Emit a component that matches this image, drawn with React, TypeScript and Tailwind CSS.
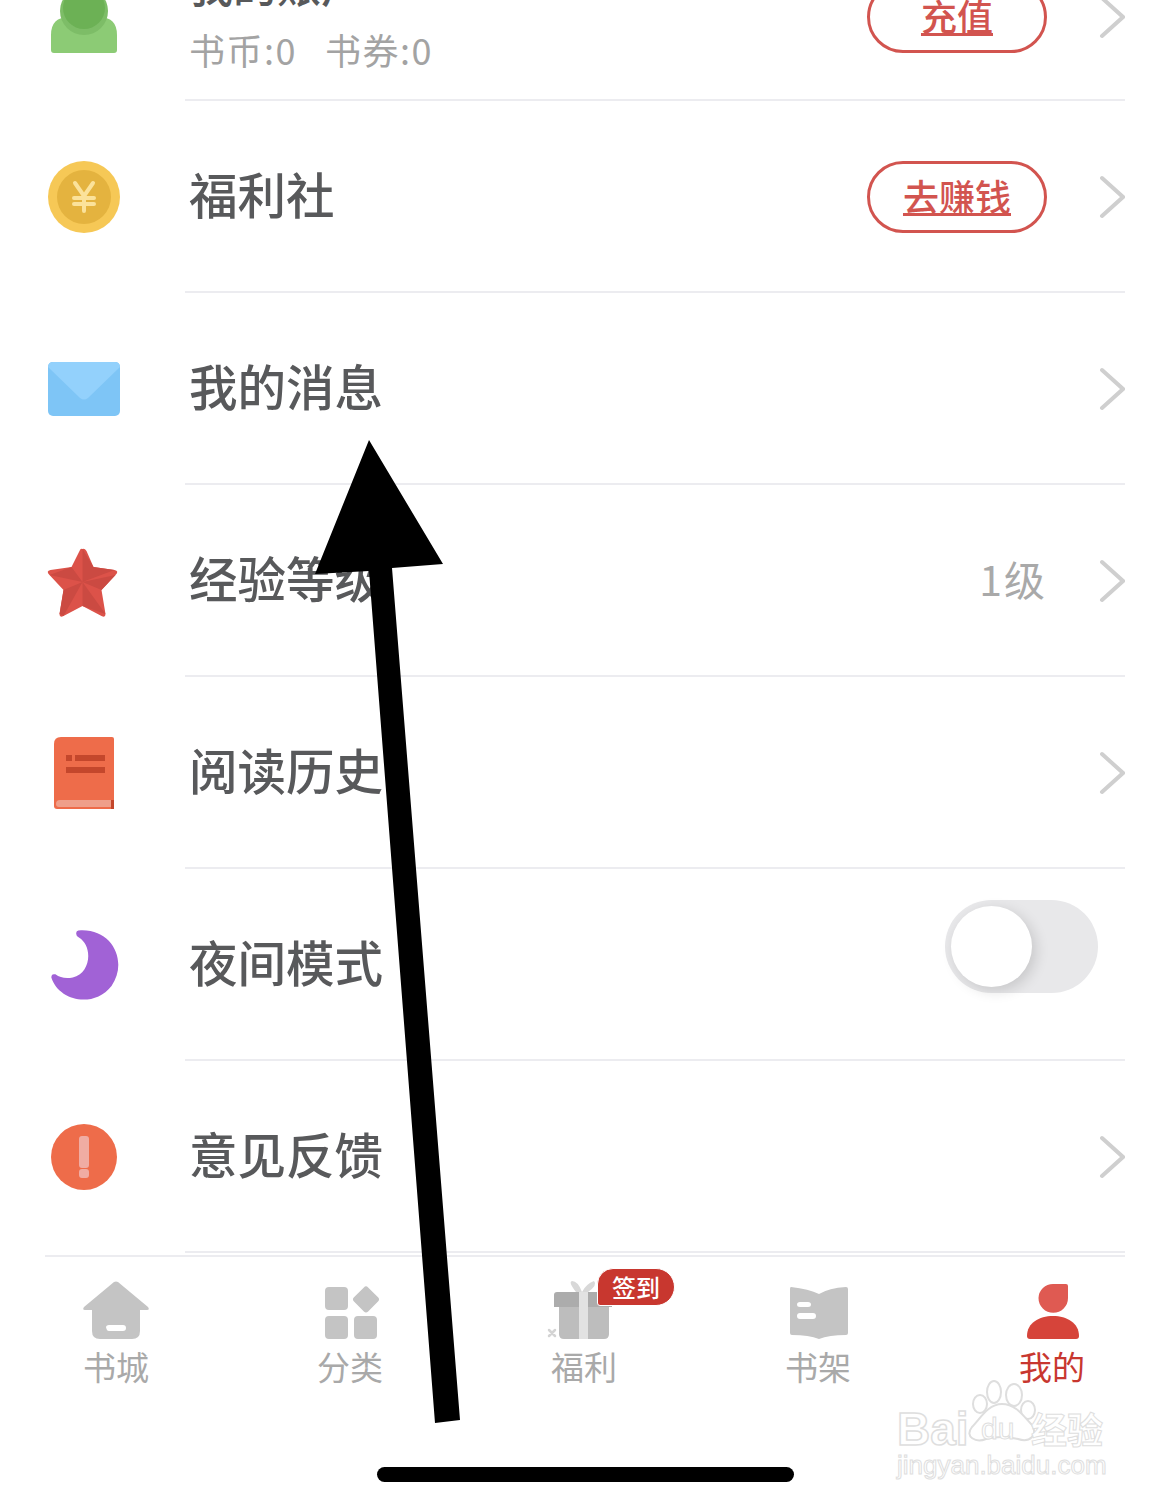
import React from 'react';

const cjk = 'font-["Noto_Sans_CJK_SC","Noto_Sans",sans-serif]';

function Chevron() {
  return (
    <svg width="26" height="44" viewBox="0 0 26 44" className="shrink-0">
      <path d="M3 3 L24 22 L3 41" fill="none" stroke="#cfcfcf" strokeWidth="4" strokeLinecap="round" strokeLinejoin="miter" />
    </svg>
  );
}

function PillButton({ label }: { label: string }) {
  return (
    <div className="flex h-[72px] w-[180px] items-center justify-center rounded-full border-[3px] border-[#d2544f] pb-[4px] text-[36px] leading-[44px] font-medium text-[#d2544f] underline decoration-[3px] underline-offset-[2px]">
      {label}
    </div>
  );
}

function RowIcon({ children }: { children: React.ReactNode }) {
  return (
    <svg width="80" height="80" viewBox="-40 -40 80 80" className="shrink-0">
      {children}
    </svg>
  );
}

const icons = {
  user: (
    <RowIcon>
      <path d="M-33 36 V18 Q-33 0 -15 0 H15 Q33 0 33 18 V33 Q33 36 30 36 H-30 Q-33 36 -33 33 Z" fill="#8ccb75" />
      <circle cx="0" cy="-6" r="24" fill="#7dbd67" />
      <circle cx="0" cy="-9" r="21" fill="#6cb155" />
    </RowIcon>
  ),
  coin: (
    <RowIcon>
      <circle r="36" fill="#f6c856" />
      <circle r="27" fill="#e4b33f" />
      <path d="M-9 -14 L0 -1 L9 -14 M-10 1 H10 M-10 7 H10 M0 -1 V14" fill="none" stroke="#fbe29b" strokeWidth="4" strokeLinecap="round" strokeLinejoin="round" />
    </RowIcon>
  ),
  mail: (
    <RowIcon>
      <rect x="-36" y="-27" width="72" height="54" rx="5" fill="#7ec5f6" />
      <path d="M-36 -22 Q-36 -27 -31 -27 H31 Q36 -27 36 -22 L4 9 Q0 12 -4 9 Z" fill="#93d1fc" />
    </RowIcon>
  ),
  star: (
    <RowIcon>
      <g transform="translate(-1.5 3)">
        <path d="M0 -35 Q2 -36 4 -33 L11 -17 L32 -14 Q37 -13 33 -9 L19 6 L23 30 Q23 34 19 32 L0 22 L-19 32 Q-23 34 -23 30 L-19 6 L-33 -9 Q-37 -13 -32 -14 L-11 -17 L-3 -33 Q-2 -36 0 -35 Z" fill="#dc5249" />
        <path d="M0 -35 L11 -17 L32 -14 L0 -2 Z M33 -9 L19 6 L0 -2 Z M23 30 L0 22 L0 -2 Z M-19 32 L-23 30 L-19 6 L0 -2 Z M-33 -9 L-11 -17 L0 -2 Z" fill="#cb4a42" />
      </g>
    </RowIcon>
  ),
  book: (
    <RowIcon>
      <path d="M-30 -29 Q-30 -36 -23 -36 H28 Q30 -36 30 -34 V34 Q30 36 28 36 H-27 Q-30 36 -30 33 Z" fill="#ee6c4a" />
      <path d="M-28 31 Q-28 27 -24 27 H27 V34 H-25 Q-28 34 -28 31 Z" fill="#ef9f8a" />
      <rect x="27" y="27" width="3" height="9" fill="#c4472c" />
      <rect x="-18" y="-18" width="6" height="6" fill="#c4472c" />
      <rect x="-9" y="-18" width="30" height="6" fill="#c4472c" />
      <rect x="-18" y="-6" width="39" height="6" fill="#c4472c" />
    </RowIcon>
  ),
  moon: (
    <RowIcon>
      <g transform="translate(1 2) scale(1.02 1.05)">
        <path d="M-8 -34 Q-10 -30 -6 -28 C8 -20 6 6 -12 10 Q-22 12 -29 7 Q-33 6 -33 10 C-26 32 8 40 26 18 C42 -4 28 -36 -4 -35 Q-7 -35 -8 -34 Z" fill="#a162d6" />
      </g>
    </RowIcon>
  ),
  alert: (
    <RowIcon>
      <circle r="33" fill="#ee6c4a" />
      <rect x="-5" y="-21" width="10" height="32" rx="3" fill="#f0aca3" />
      <rect x="-5" y="12" width="10" height="9" rx="3" fill="#f0aca3" />
    </RowIcon>
  ),
};

function Row({ icon, title, right, chevron = true }: { icon: React.ReactNode; title: string; right?: React.ReactNode; chevron?: boolean }) {
  return (
    <div className="flex h-[192px]">
      <div className="flex w-[185px] shrink-0 items-center pl-[44px]">{icon}</div>
      <div className="mr-[45px] flex flex-1 items-center border-b-2 border-[#ececf0] pt-[2px] pl-[4px]">
        <div className="mb-[8px] flex-1 text-[48.5px] leading-[60px] font-medium text-[#58595b]">{title}</div>
        {right}
        {chevron && <div className="ml-[52px]"><Chevron /></div>}
      </div>
    </div>
  );
}

function Switch() {
  return (
    <div className="mr-[27px] mb-[38px] h-[93px] w-[153px] rounded-full bg-[#e8e8ea] p-[6px]">
      <div className="h-[81px] w-[81px] rounded-full bg-white shadow-[4px_4px_14px_rgba(0,0,0,0.14)]" />
    </div>
  );
}

function Tab({ label, active, children }: { label: string; active?: boolean; children: React.ReactNode }) {
  return (
    <div className="flex flex-col items-center">
      {children}
      <div className={`mt-[5px] text-[33px] leading-[44px] ${active ? 'text-[#c8372f]' : 'text-[#a9a9a9]'}`}>{label}</div>
    </div>
  );
}

function TabIcon({ children }: { children: React.ReactNode }) {
  return (
    <svg width="80" height="60" viewBox="-41 -60 80 60">
      {children}
    </svg>
  );
}

export default function App() {
  return (
    <div className={`relative h-[1506px] w-[1170px] overflow-hidden bg-white ${cjk}`}>
      <div className="-mt-[67px]">
        <div className="flex h-[168px]">
          <div className="flex w-[185px] shrink-0 items-center pl-[44px]">{icons.user}</div>
          <div className="mr-[45px] flex flex-1 items-center border-b-2 border-[#ececf0] pt-[2px] pl-[4px]">
            <div className="mb-[8px] flex-1">
              <div className="text-[44px] leading-[60px] font-medium text-[#58595b]">我的账户</div>
              <div className="mt-[12px] flex gap-[28px] text-[36px] leading-[46px] tracking-[1.5px] text-[#a3a3a3]">
                <span>书币:0</span>
                <span>书券:0</span>
              </div>
            </div>
            <PillButton label="充值" />
            <div className="ml-[52px]"><Chevron /></div>
          </div>
        </div>
        <Row icon={icons.coin} title="福利社" right={<PillButton label="去赚钱" />} />
        <Row icon={icons.mail} title="我的消息" />
        <Row icon={icons.star} title="经验等级" right={<span className="mb-[6px] text-[41px] leading-[48px] tracking-[2px] text-[#a9a9a9]">1级</span>} />
        <Row icon={icons.book} title="阅读历史" />
        <Row icon={icons.moon} title="夜间模式" right={<Switch />} chevron={false} />
        <Row icon={icons.alert} title="意见反馈" />
      </div>

      <div className="mx-[45px] mt-[2px] h-[2px] bg-[#ececf0]" />
      <div className="-ml-px grid w-[1170px] grid-cols-5 pt-[22px]">
        <Tab label="书城">
          <TabIcon>
            <path transform="translate(-1 0)" fillRule="evenodd" d="M-2 -57 Q0 -58 2 -57 L32 -32 Q34 -29 31 -29 H24 V-8 Q24 0 16 0 H-16 Q-24 0 -24 -8 V-29 H-31 Q-34 -29 -32 -32 Z M-10 -14 Q-10 -8 -7 -8 H7 Q10 -8 10 -11 Q10 -14 7 -14 H-7 Q-10 -14 -10 -11 Z" fill="#c4c4c4" />
          </TabIcon>
        </Tab>
        <Tab label="分类">
          <TabIcon>
            <g fill="#c4c4c4">
              <rect x="-26" y="-52" width="23" height="23" rx="4" />
              <rect x="-26" y="-23" width="23" height="23" rx="4" />
              <rect x="3" y="-23" width="23" height="23" rx="4" />
              <rect x="-9" y="-9" width="20" height="20" rx="3" transform="translate(15 -41) rotate(45)" />
            </g>
          </TabIcon>
        </Tab>
        <Tab label="福利">
          <div className="relative">
            <TabIcon>
              <g transform="translate(-1 0)">
                <path d="M-8 -47 Q-16 -57 -12 -58 Q-6 -58 -2 -47 Q2 -55 10 -58 Q14 -54 4 -47 Z" fill="#d8d8d8" />
                <path d="M-30 -44 Q-30 -47 -27 -47 H28 V-32 H-30 Z" fill="#acacac" />
                <path d="M-25 -32 H25 V-5 Q25 0 20 0 H-20 Q-25 0 -25 -5 Z" fill="#bdbdbd" />
                <rect x="-5" y="-47" width="9" height="47" fill="#e2e2e2" />
                <path d="M-35 -9 L-29 -3 M-29 -9 L-35 -3" stroke="#d4d4d4" strokeWidth="2.5" strokeLinecap="round" />
              </g>
            </TabIcon>
            <div className="absolute top-[-11px] left-[53px] flex h-[38px] w-[78px] items-center justify-center rounded-tl-[16px] rounded-tr-[19px] rounded-br-[19px] rounded-bl-[3px] border border-white bg-[#c8372f] text-[24px] leading-none font-medium text-white">
              签到
            </div>
          </div>
        </Tab>
        <Tab label="书架">
          <TabIcon>
            <path fillRule="evenodd" d="M-28 -52 Q-29 -52 -29 -50 V-6 Q-29 -4 -27 -4 Q-10 -4 0 0 Q10 -4 27 -4 Q29 -4 29 -6 V-50 Q29 -52 27 -52 Q10 -51 0 -45 Q-10 -50 -28 -52 Z M-19 -37 Q-22 -37 -22 -34.5 Q-22 -32 -19 -32 H-11 Q-8 -32 -8 -34.5 Q-8 -37 -11 -37 Z M-19 -26 Q-22 -26 -22 -23 Q-22 -20 -19 -20 H-6 Q-3 -20 -3 -23 Q-3 -26 -6 -26 Z" fill="#c4c4c4" />
          </TabIcon>
        </Tab>
        <Tab label="我的" active>
          <TabIcon>
            <path d="M0 -55 H13 Q15 -55 15 -53 V-41 A14.5 14.5 0 0 1 -14.5 -41 A14.5 14.5 0 0 1 0 -55 Z" fill="#df5a52" />
            <path d="M-26 -3 C-26 -16 -14 -23 0 -23 C14 -23 26 -16 26 -3 Q26 0 23 0 H-23 Q-26 0 -26 -3 Z" fill="#d6443a" />
          </TabIcon>
        </Tab>
      </div>
      <div className="mx-auto mt-[79px] h-[15px] w-[417px] rounded-full bg-black" />

      {/* annotation arrow drawn over the page */}
      <svg width="1170" height="1506" viewBox="0 0 1170 1506" className="pointer-events-none absolute top-0 left-0">
        <polygon points="369,440 443,564 392,568 460,1420 435,1423 369,571 315,574" fill="#000" />
      </svg>

      {/* Baidu watermark */}
      <div className="pointer-events-none absolute top-[1376px] left-[895px] h-[110px] w-[220px]">
        <svg width="110" height="70" viewBox="0 0 110 70" className="absolute top-[-3px] left-[55px]">
          <g fill="#fff" stroke="#dedede" strokeWidth="2">
            <ellipse cx="44" cy="19" rx="7" ry="11" />
            <ellipse cx="64" cy="22" rx="8" ry="11" />
            <ellipse cx="30" cy="31" rx="7" ry="9" />
            <ellipse cx="78" cy="37" rx="7" ry="9" />
            <path d="M52 31 C38 31 30 46 22 54 C14 64 26 70 36 66 Q52 62 68 66 C80 70 88 62 82 52 C74 44 66 31 52 31 Z" />
          </g>
        </svg>
        <div className="absolute top-[28px] left-[2px] font-['Liberation_Sans',sans-serif] text-[46px] leading-[50px] font-bold text-white [-webkit-text-stroke:1.5px_#dedede]">Bai</div>
        <div className="absolute top-[36px] left-[86px] font-['Liberation_Sans',sans-serif] text-[30px] leading-[34px] text-white [-webkit-text-stroke:1px_#dedede]">du</div>
        <div className="absolute top-[28px] left-[136px] text-[36px] leading-[48px] font-bold text-white [-webkit-text-stroke:1px_#dedede]">经验</div>
        <div className="absolute top-[74px] left-[2px] font-['Liberation_Sans',sans-serif] text-[26px] leading-[30px] text-white [-webkit-text-stroke:1px_#dedede]">jingyan.baidu.com</div>
      </div>
    </div>
  );
}
